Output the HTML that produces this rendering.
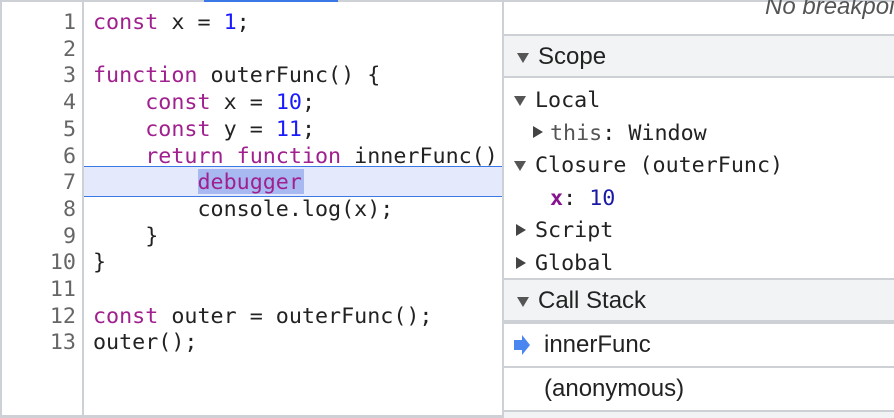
<!DOCTYPE html><html><head><style>
body{margin:0;width:894px;height:418px;overflow:hidden;background:#fff;position:relative;font-family:"Liberation Sans",sans-serif}
.a{position:absolute}
.mono{font-family:"DejaVu Sans Mono",monospace;font-size:21.7px;color:#222}
.k{color:#a0208f}.n{color:#1a1aff}
.ln{position:absolute;left:0;top:0;width:76px;text-align:right;color:#666}
.cd{position:absolute;left:93px;top:0;white-space:pre}
.hd{background:#f1f3f4;font-size:24px;color:#222}
.tri{position:absolute;display:block;width:0;height:0;border-left:6px solid transparent;border-right:6px solid transparent;border-top:10px solid #555}
.tr{position:absolute;display:block;width:0;height:0;border-top:6px solid transparent;border-bottom:6px solid transparent;border-left:10px solid #444}
.t{position:absolute;white-space:nowrap}
</style></head><body>
<div class="a" style="left:0;top:0;width:894px;height:2px;background:#cdd0d4"></div>
<div class="a" style="left:204px;top:0;width:134px;height:2px;background:#3b78e7"></div>
<div class="a" style="left:0;top:0;width:2px;height:418px;background:#cdd0d4"></div>
<div class="a" style="left:82px;top:0;width:2px;height:418px;background:#cdd0d4"></div>
<div class="a" style="left:0;top:415px;width:504px;height:3px;background:#cdd0d4"></div>
<div class="a" style="left:502px;top:0;width:2px;height:418px;background:#cdd0d4"></div>
<div class="a" style="left:84px;top:166px;width:418px;height:31px;background:#e4e9fb;border-top:1px solid #3b78e7;border-bottom:1px solid #3b78e7;box-sizing:border-box"></div>
<div class="a" style="left:198px;top:169px;width:106px;height:25px;background:#a8b9f2"></div>
<div class="mono a" style="left:0;top:10px;width:502px;height:370px;line-height:26.7px"><div class="ln">1<br>2<br>3<br>4<br>5<br>6<br>7<br>8<br>9<br>10<br>11<br>12<br>13</div><div class="cd"><span class="k">const</span> x = <span class="n">1</span>;

<span class="k">function</span> outerFunc() {
    <span class="k">const</span> x = <span class="n">10</span>;
    <span class="k">const</span> y = <span class="n">11</span>;
    <span class="k">return</span> <span class="k">function</span> innerFunc()
        <span class="k">debugger</span>
        console.log(x);
    }
}

<span class="k">const</span> outer = outerFunc();
outer();</div></div>
<div class="a" style="left:765px;top:-7px;font-size:24px;font-style:italic;color:#555;white-space:nowrap">No breakpoi</div>
<div class="a" style="left:504px;top:34px;width:390px;height:2px;background:#cdd0d4"></div>
<div class="a hd" style="left:504px;top:36px;width:390px;height:40px"><span class="tri" style="left:13px;top:17px"></span><span class="a" style="left:34px;top:7px">Scope</span></div>
<div class="a" style="left:504px;top:76px;width:390px;height:2px;background:#cdd0d4"></div>
<div class="mono a" style="left:504px;top:86px;width:390px;height:190px;line-height:30px">
<span class="tri" style="left:10px;top:10px"></span><div class="t" style="left:31px;top:0">Local</div>
<span class="tr" style="left:29px;top:40px"></span><div class="t" style="left:46px;top:32.6px"><span style="color:#555">this</span>: Window</div>
<span class="tri" style="left:10px;top:75px"></span><div class="t" style="left:31px;top:65px">Closure (outerFunc)</div>
<div class="t" style="left:46px;top:98px"><span style="color:#881391;font-weight:bold">x</span>: <span style="color:#1a1aa6">10</span></div>
<span class="tr" style="left:12px;top:138px"></span><div class="t" style="left:31px;top:130px">Script</div>
<span class="tr" style="left:12px;top:171px"></span><div class="t" style="left:31px;top:163px">Global</div>
</div>
<div class="a" style="left:504px;top:278px;width:390px;height:2px;background:#cdd0d4"></div>
<div class="a hd" style="left:504px;top:280px;width:390px;height:40px"><span class="tri" style="left:13px;top:17px"></span><span class="a" style="left:34px;top:7px">Call Stack</span></div>
<div class="a" style="left:504px;top:320px;width:390px;height:4px;background:#cdd0d4"></div>
<svg class="a" style="left:514px;top:335px" width="16" height="20"><path d="M0 5H8V0L16 10L8 20V15H0Z" fill="#4a86f0"/></svg>
<div class="a" style="left:544px;top:331px;font-size:24px;color:#222">innerFunc</div>
<div class="a" style="left:504px;top:366px;width:390px;height:2px;background:#cdd0d4"></div>
<div class="a" style="left:544px;top:375px;font-size:24px;color:#222">(anonymous)</div>
<div class="a" style="left:504px;top:410px;width:390px;height:2px;background:#cdd0d4"></div>
<div class="a" style="left:504px;top:412px;width:390px;height:6px;background:#f1f3f4"></div>
</body></html>
